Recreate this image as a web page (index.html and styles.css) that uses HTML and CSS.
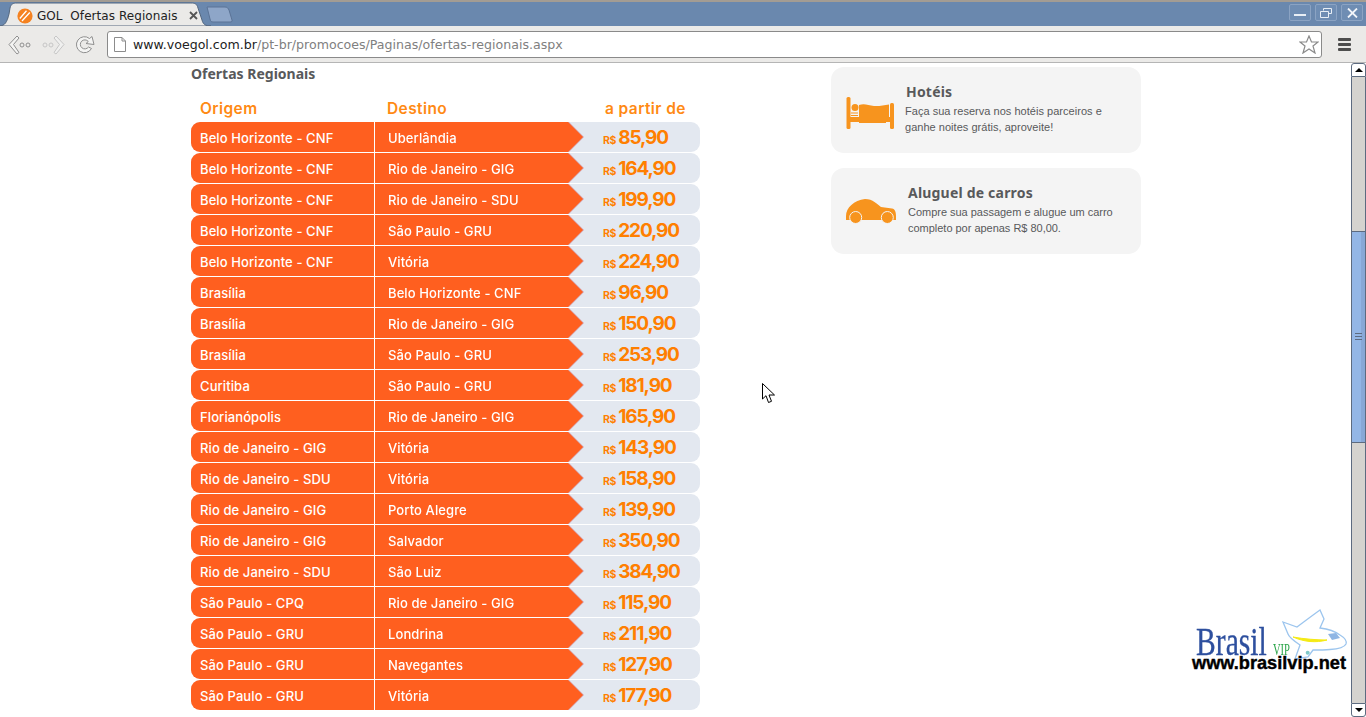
FILE: index.html
```html
<!DOCTYPE html>
<html lang="pt-BR">
<head>
<meta charset="utf-8">
<title>GOL Ofertas Regionais</title>
<link rel="stylesheet" href="styles.css">
</head>
<body>
<div class="window">
  <header class="tabstrip">
    <div class="tab">
      <svg class="tab-shape" width="212" height="24" viewBox="0 0 212 24"><path d="M0 24C6 24 8 20 10 12L11 6C12 2 14 1 18 1H192C196 1 198 2 199 6L203 18C204 22 206 24 212 24Z" fill="#ebeae8" stroke="#54677f" stroke-width="1"/></svg>
      <svg class="favicon" width="16" height="16" viewBox="0 0 16 16"><ellipse cx="8" cy="8" rx="7.600" ry="7.600" fill="#f58220"/><path d="M2.800 10.500L9.500 2.800M5 13L12.800 4.500" stroke="#fff" stroke-width="1.300" fill="none"/></svg>
      <span class="tab-title">GOL  Ofertas Regionais</span>
      <svg class="tab-close" width="9" height="9" viewBox="0 0 9 9"><path d="M1 1L8 8M8 1L1 8" stroke="#555" stroke-width="1.800"/></svg>
    </div>
    <svg class="newtab" width="27" height="17" viewBox="0 0 27 17"><path d="M1 1H19C21 1 22 2 23 4L26 14C26.500 15.500 25.500 16 24 16H7C5 16 4.500 15 4 13L1 1Z" fill="#8ea6c8" stroke="#5a7396"/></svg>
    <div class="winbtns">
      <div class="winbtn"><svg width="12" height="10" viewBox="0 0 12 10"><rect x="0" y="6" width="12" height="2" fill="#e8eef5"/></svg></div>
      <div class="winbtn"><svg width="12" height="10" viewBox="0 0 12 10"><path d="M3.500 2.500V.5H11.500V5.500H8.500M.5 3.500H8.500V9.500H.5Z" fill="none" stroke="#e8eef5"/></svg></div>
      <div class="winbtn"><svg width="11" height="10" viewBox="0 0 11 10"><path d="M1 .5L10 9.500M10 .5L1 9.500" stroke="#f2f5f9" stroke-width="1.800"/></svg></div>
    </div>
  </header>
  <nav class="toolbar">
    <svg class="navicon" width="23" height="20" viewBox="0 0 23 20"><path d="M9 1L1 9.500L9 19L11 17.500L5.500 9.500L11 3Z" fill="#f4f4f3" stroke="#8f8f8f"/><circle cx="14" cy="10" r="2" fill="none" stroke="#8f8f8f"/><circle cx="20" cy="10" r="2" fill="none" stroke="#8f8f8f"/></svg>
    <svg class="navicon" width="23" height="20" viewBox="0 0 23 20"><path d="M14 1L22 9.500L14 19L12 17.500L17.500 9.500L12 3Z" fill="#f0f0ef" stroke="#c6c6c6"/><circle cx="9" cy="10" r="2" fill="none" stroke="#c6c6c6"/><circle cx="3" cy="10" r="2" fill="none" stroke="#c6c6c6"/></svg>
    <svg class="navicon" width="20" height="20" viewBox="0 0 20 20"><path d="M16.500 13.500A8 8 0 1 1 14.500 3.500L17 1.500L19 9.500L11 8.500L13.300 6.500A4.500 4.500 0 1 0 13.500 12Z" fill="#f4f4f3" stroke="#8f8f8f"/></svg>
    <div class="omnibox">
      <svg class="page-icon" width="12" height="15" viewBox="0 0 12 15"><path d="M.5.5H8L11.500 4V14.500H.5Z M8 .5V4H11.500" fill="#fff" stroke="#8c8c8c"/></svg>
      <span class="url"><span class="url-host">www.voegol.com.br</span>/pt-br/promocoes/Paginas/ofertas-regionais.aspx</span>
      <svg class="star" width="20" height="19" viewBox="0 0 20 19"><path d="M10 1L12.500 7H19L14 11L16 18L10 14L4 18L6 11L1 7H7.500Z" fill="#fff" stroke="#8a8a8a" stroke-width="1.200"/></svg>
    </div>
    <div class="menu"><i></i><i></i><i></i></div>
  </nav>
  <div class="viewport">
    <main class="page">
      <section class="offers">
        <h1 class="offers-title">Ofertas Regionais</h1>
        <div class="table-head"><span class="h-origin">Origem</span><span class="h-dest">Destino</span><span class="h-price">a partir de</span></div>
        <div class="row"><div class="origin">Belo Horizonte - CNF</div><div class="dest">Uberlândia</div><div class="price"><small>R$</small>85,90</div></div>
        <div class="row"><div class="origin">Belo Horizonte - CNF</div><div class="dest">Rio de Janeiro - GIG</div><div class="price"><small>R$</small>164,90</div></div>
        <div class="row"><div class="origin">Belo Horizonte - CNF</div><div class="dest">Rio de Janeiro - SDU</div><div class="price"><small>R$</small>199,90</div></div>
        <div class="row"><div class="origin">Belo Horizonte - CNF</div><div class="dest">São Paulo - GRU</div><div class="price"><small>R$</small>220,90</div></div>
        <div class="row"><div class="origin">Belo Horizonte - CNF</div><div class="dest">Vitória</div><div class="price"><small>R$</small>224,90</div></div>
        <div class="row"><div class="origin">Brasília</div><div class="dest">Belo Horizonte - CNF</div><div class="price"><small>R$</small>96,90</div></div>
        <div class="row"><div class="origin">Brasília</div><div class="dest">Rio de Janeiro - GIG</div><div class="price"><small>R$</small>150,90</div></div>
        <div class="row"><div class="origin">Brasília</div><div class="dest">São Paulo - GRU</div><div class="price"><small>R$</small>253,90</div></div>
        <div class="row"><div class="origin">Curitiba</div><div class="dest">São Paulo - GRU</div><div class="price"><small>R$</small>181,90</div></div>
        <div class="row"><div class="origin">Florianópolis</div><div class="dest">Rio de Janeiro - GIG</div><div class="price"><small>R$</small>165,90</div></div>
        <div class="row"><div class="origin">Rio de Janeiro - GIG</div><div class="dest">Vitória</div><div class="price"><small>R$</small>143,90</div></div>
        <div class="row"><div class="origin">Rio de Janeiro - SDU</div><div class="dest">Vitória</div><div class="price"><small>R$</small>158,90</div></div>
        <div class="row"><div class="origin">Rio de Janeiro - GIG</div><div class="dest">Porto Alegre</div><div class="price"><small>R$</small>139,90</div></div>
        <div class="row"><div class="origin">Rio de Janeiro - GIG</div><div class="dest">Salvador</div><div class="price"><small>R$</small>350,90</div></div>
        <div class="row"><div class="origin">Rio de Janeiro - SDU</div><div class="dest">São Luiz</div><div class="price"><small>R$</small>384,90</div></div>
        <div class="row"><div class="origin">São Paulo - CPQ</div><div class="dest">Rio de Janeiro - GIG</div><div class="price"><small>R$</small>115,90</div></div>
        <div class="row"><div class="origin">São Paulo - GRU</div><div class="dest">Londrina</div><div class="price"><small>R$</small>211,90</div></div>
        <div class="row"><div class="origin">São Paulo - GRU</div><div class="dest">Navegantes</div><div class="price"><small>R$</small>127,90</div></div>
        <div class="row"><div class="origin">São Paulo - GRU</div><div class="dest">Vitória</div><div class="price"><small>R$</small>177,90</div></div>
      </section>
      <aside class="side">
        <article class="card card-hotel">
          <svg class="card-icon" width="48" height="32" viewBox="0 0 48 32"><rect x="0.500" y="0" width="4" height="32" rx="1.500" fill="#f7941e"/><rect x="44" y="6" width="4" height="26" rx="1.500" fill="#f7941e"/><circle cx="9" cy="10.500" r="3.500" fill="#f7941e"/><path d="M13 8C18 6 22 8 28 9C33 9.500 38 8 43 7.500V20H40V26H13Z" fill="#f7941e"/><path d="M4 20H44V25H4Z" fill="#f7941e"/><path d="M5 16H12M5 18.500H12" stroke="#f7941e"/></svg>
          <div class="card-body">
            <h2 class="card-title">Hotéis</h2>
            <p class="card-text">Faça sua reserva nos hotéis parceiros e ganhe noites grátis, aproveite!</p>
          </div>
        </article>
        <article class="card card-car">
          <svg class="card-icon" width="50" height="25" viewBox="0 0 50 25"><path d="M0 17C0 9 8 1 19 0C27 0 31 5 35 8L46 9.500C49 10 50 13 50 17V21H0Z" fill="#f7941e"/><circle cx="9.700" cy="18.500" r="6" fill="#f7941e" stroke="#f4f4f4"/><circle cx="41.300" cy="18.500" r="6" fill="#f7941e" stroke="#f4f4f4"/></svg>
          <div class="card-body">
            <h2 class="card-title">Aluguel de carros</h2>
            <p class="card-text">Compre sua passagem e alugue um carro completo por apenas R$ 80,00.</p>
          </div>
        </article>
      </aside>
      <svg class="cursor" width="14" height="21" viewBox="0 0 14 21"><path d="M.5.5V16L4 12.700L6.500 19.500L9.500 18.300L7 12H12.500Z" fill="#fff" stroke="#000"/></svg>
      <div class="watermark">
        <svg class="plane" width="70" height="56" viewBox="0 0 70 56"><path d="M3 15L17 20C25 14 33 8 40 3L44 12L40 21C48 22 56 25 60 28C65 31 67 34 66 37C64 41 58 42 50 42.500C44 43 38 43 33 43L28 50L15 52L20 38C14 34 9 30 8 27Z" fill="#fff" stroke="#9cc5ee" stroke-width="1.300"/><path d="M13 30C24 35 36 36 47 33C37 33 24 32 13 30Z" fill="#f5ea14" stroke="#f5ea14"/><path d="M48 27L56 26L60 31L52 33Z" fill="#8fb6e4"/><circle cx="27.700" cy="45.700" r="2" fill="#7fc8c8"/></svg>
        <div class="wm-name"><span class="wm-brasil">Brasil</span><span class="wm-vip">VIP</span></div>
        <div class="wm-url">www.brasilvip.net</div>
      </div>
    </main>
    <div class="scrollbar">
      <div class="sb-btn sb-up"></div>
      <div class="sb-track sb-before"></div>
      <div class="sb-thumb"><i></i><i></i><i></i></div>
      <div class="sb-track sb-after"></div>
      <div class="sb-btn sb-down"></div>
    </div>
  </div>
</div>
</body>
</html>
```
FILE: styles.css
```css
* { box-sizing: border-box; }
html, body { margin: 0; height: 100%; overflow: hidden; background: #fff; }
.window { width: 1366px; height: 717px; display: flex; flex-direction: column; overflow: hidden; }

.tabstrip { height: 26px; flex: none; display: flex; align-items: flex-start; background: #6a88ae; border-top: 2px solid #a39c93; position: relative; }
.tab { width: 208px; height: 24px; position: relative; display: flex; align-items: center; padding: 3px 0 0 18px; margin-left: -1px; flex: none; }
.tab-shape { position: absolute; left: 0; top: 0; }
.favicon, .tab-title, .tab-close { position: relative; }
.tab-title { font: 12px "DejaVu Sans", sans-serif; letter-spacing: .06px; color: #222; white-space: pre; margin-left: 4px; width: 150px; }
.tab-close { margin-left: 2px; }
.newtab { margin: 4px 0 0 -1px; flex: none; }
.winbtns { margin-left: auto; margin-top: 2px; margin-right: 3px; display: flex; gap: 4px; }
.winbtn { width: 22px; height: 17px; border: 1px solid #8ba3c3; border-radius: 2px; background: #6f8db3; display: flex; align-items: center; justify-content: center; }

.toolbar { height: 37px; flex: none; display: flex; align-items: center; background: #ebeae8; border-bottom: 1px solid #b5b5b5; padding: 1px 15px 0 8px; }
.navicon { flex: none; margin-right: 11px; }
.navicon:nth-child(3) { margin-right: 13px; margin-left: -1px; }
.omnibox { width: 1215px; height: 27px; margin-left: -1px; flex: none; background: #fff; border: 1px solid #8a8a8a; border-radius: 3px; display: flex; align-items: center; padding: 0 2px 0 6px; }
.page-icon { flex: none; }
.url { font: 12.600px "DejaVu Sans", sans-serif; color: #808080; margin-left: 7px; white-space: nowrap; flex: 1; }
.url-host { color: #222; }
.star { flex: none; }
.menu { margin-left: 16px; width: 13px; display: flex; flex-direction: column; gap: 2px; flex: none; }
.menu i { height: 3px; background: #4d4d4d; border-radius: 1px; display: block; }

.viewport { flex: 1; display: flex; min-height: 0; }
.page { flex: 1; position: relative; overflow: hidden; display: flex; align-items: flex-start; padding-left: 191px; gap: 131px; background: #fff; }

.offers { width: 509px; flex: none; }
.offers-title { margin: 2px 0 0; font: 700 14px/17px "Noto Sans", sans-serif; color: #58595b; }
.table-head { display: flex; height: 40px; padding-top: 17px; font: 600 15.500px/19px Inter, sans-serif; letter-spacing: .4px; color: #ff8a14; }
.h-origin { margin-left: 9px; width: 187px; }
.h-dest { width: 218px; }
.row { display: grid; grid-template-columns: 184px 209px 1fr; grid-template-rows: 30px; height: 30px; margin-bottom: 1px; background: #e3e8f0; border-radius: 9px; overflow: hidden; color: #fff; font: 500 13px/30px Inter, sans-serif; letter-spacing: .1px; }
.origin { background: #ff5f1f; padding: 1px 0 0 9px; border-right: 1px solid #fff; white-space: nowrap; }
.dest { position: relative; z-index: 0; padding: 1px 0 0 13px; filter: drop-shadow(1px 0 0 #d4a3b0); white-space: nowrap; }
.dest::before { content: ""; position: absolute; inset: 0; z-index: -1; background: #ff5f1f; clip-path: polygon(0 0, calc(100% - 16px) 0, calc(100% - 1px) 50%, calc(100% - 16px) 100%, 0 100%); }
.price { padding: 1px 0 0 19px; color: #ff7f00; font: 700 19px/30px Inter, sans-serif; letter-spacing: -1.100px; white-space: nowrap; }
.price small { font: 700 10.500px/30px Inter, sans-serif; letter-spacing: -0.300px; margin-right: 2px; }

.side { width: 310px; flex: none; display: flex; flex-direction: column; gap: 15px; padding-top: 4px; }
.card { height: 86px; background: #f4f4f4; border-radius: 13px; display: flex; align-items: center; padding-left: 15px; }
.card-hotel .card-icon { flex: none; margin-top: 6px; }
.card-car .card-icon { flex: none; }
.card-body { margin-left: 12px; width: 215px; margin-top: -2px; }
.card-title { margin: 0; font: 700 14px/18px "Noto Sans", sans-serif; color: #58595b; letter-spacing: .2px; }
.card-text { margin: 2px 0 0; font: 11px/16px "Liberation Sans", sans-serif; color: #58595b; }
.card-hotel .card-text { margin-left: -1px; letter-spacing: .03px; }
.card-car .card-text { letter-spacing: -.02px; }

.cursor { position: absolute; left: 762px; top: 320px; }
.watermark { position: absolute; left: 1192px; top: 544px; width: 157px; height: 68px; }
.plane { position: absolute; left: 88px; top: 0; }
.wm-name { position: absolute; left: 4px; top: 15px; white-space: nowrap; color: #2d4f9e; font-family: "Liberation Serif", serif; display: flex; align-items: baseline; }
.wm-brasil { font-size: 39px; line-height: 40px; display: inline-block; width: 77px; transform: scaleX(.76); transform-origin: left; -webkit-text-stroke: .3px #2d4f9e; }
.wm-vip { font-size: 17px; color: #2ca54a; display: inline-block; transform: scaleX(.62); transform-origin: left; }
.wm-url { position: absolute; left: 0; top: 46px; font: 700 18.200px/20px "Liberation Sans", sans-serif; color: #000; -webkit-text-stroke: .4px #000; white-space: nowrap; }

.scrollbar { width: 15px; flex: none; display: flex; flex-direction: column; }
.sb-btn { height: 14px; flex: none; background: #fff; border: 1px solid #5d6b80; position: relative; display: flex; align-items: center; justify-content: center; }
.sb-up { border-radius: 3px 3px 0 0; }
.sb-down { border-radius: 0 0 3px 3px; }
.sb-up::after { content: ""; border: 4px solid transparent; border-top: 0; border-bottom: 4px solid #000; }
.sb-down::after { content: ""; border: 4px solid transparent; border-bottom: 0; border-top: 4px solid #000; }
.sb-track { background: #d5d3cf; border-left: 1px solid #5d6b80; border-right: 1px solid #5d6b80; flex: none; }
.sb-before { height: 154px; }
.sb-after { flex: 1; }
.sb-thumb { height: 212px; flex: none; border: 1px solid #5d6b80; background: linear-gradient(to right, #93b6e6 70%, #88a8d6 70%); display: flex; flex-direction: column; align-items: center; justify-content: center; gap: 1px; }
.sb-thumb i { width: 7px; height: 1px; background: #5d6b80; display: block; margin-bottom: 1px; }
```
